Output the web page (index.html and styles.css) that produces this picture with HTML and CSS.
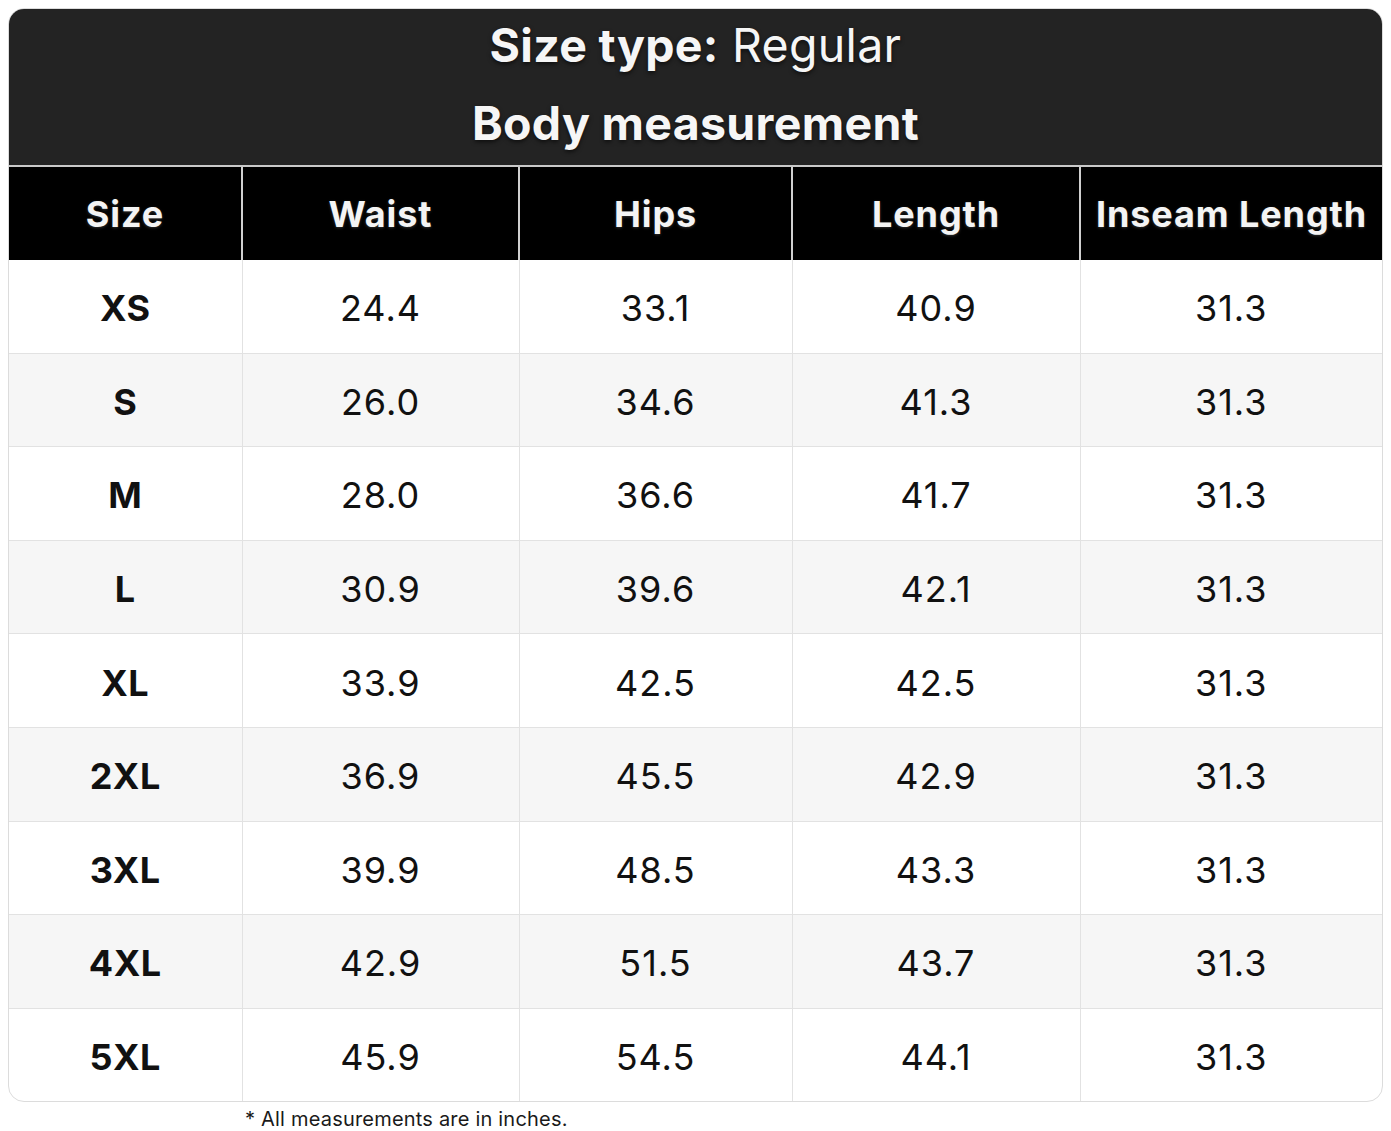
FILE: index.html
```html
<!DOCTYPE html>
<html lang="en">
<head>
<meta charset="utf-8">
<title>Size chart</title>
<link rel="stylesheet" href="styles.css">
</head>
<body>
<div class="card">
  <div class="title">
    <div class="title-line"><b>Size type:</b> Regular</div>
    <div class="title-line"><b>Body measurement</b></div>
  </div>
  <table class="chart">
    <colgroup>
      <col class="c1"><col class="c2"><col class="c3"><col class="c4"><col class="c5">
    </colgroup>
    <thead>
      <tr><th>Size</th><th>Waist</th><th>Hips</th><th>Length</th><th>Inseam Length</th></tr>
    </thead>
    <tbody>
      <tr><td class="sz">XS</td><td>24.4</td><td>33.1</td><td>40.9</td><td>31.3</td></tr>
      <tr><td class="sz">S</td><td>26.0</td><td>34.6</td><td>41.3</td><td>31.3</td></tr>
      <tr><td class="sz">M</td><td>28.0</td><td>36.6</td><td>41.7</td><td>31.3</td></tr>
      <tr><td class="sz">L</td><td>30.9</td><td>39.6</td><td>42.1</td><td>31.3</td></tr>
      <tr><td class="sz">XL</td><td>33.9</td><td>42.5</td><td>42.5</td><td>31.3</td></tr>
      <tr><td class="sz">2XL</td><td>36.9</td><td>45.5</td><td>42.9</td><td>31.3</td></tr>
      <tr><td class="sz">3XL</td><td>39.9</td><td>48.5</td><td>43.3</td><td>31.3</td></tr>
      <tr><td class="sz">4XL</td><td>42.9</td><td>51.5</td><td>43.7</td><td>31.3</td></tr>
      <tr><td class="sz">5XL</td><td>45.9</td><td>54.5</td><td>44.1</td><td>31.3</td></tr>
    </tbody>
  </table>
</div>
<p class="note">* All measurements are in inches.</p>
</body>
</html>
```
FILE: styles.css
```css
html, body {
  margin: 0;
  padding: 0;
  background: #ffffff;
}
body {
  padding: 8px;
  font-family: Inter, "Noto Sans", "Liberation Sans", sans-serif;
  color: #111111;
}
.card {
  border: 1px solid #dcdcdc;
  border-radius: 16px;
  overflow: hidden;
  background: #ffffff;
}
.title {
  background: #232323;
  color: #f6f6f6;
  text-align: center;
  height: 158px;
  border-bottom: 2px solid #c9c9c9;
  box-sizing: border-box;
  padding-top: 1px;
  display: flex;
  flex-direction: column;
  gap: 8px;
}
.title-line {
  font-size: 46.5px;
  line-height: 70px;
  font-weight: 400;
  letter-spacing: 0.3px;
  text-shadow: 0 2px 4px rgba(0, 0, 0, 0.6);
}
.title-line b {
  font-weight: 700;
}
.chart {
  width: 100%;
  border-collapse: collapse;
  table-layout: fixed;
}
.c1 { width: 233px; }
.c2 { width: 277px; }
.c3 { width: 273px; }
.c4 { width: 288px; }
.c5 { width: auto; }
.chart th {
  background: #000000;
  color: #f4f4f4;
  font-size: 36px;
  font-weight: 700;
  height: 93px;
  padding: 0;
  text-align: center;
  letter-spacing: 0.9px;
  border-left: 2px solid #d0d0d0;
  text-shadow: 0 1px 3px rgba(80, 80, 80, 0.6);
}
.chart th:first-child {
  border-left: none;
}
.chart td {
  height: 88.6px;
  padding: 4px 0 0 0;
  text-align: center;
  font-size: 36px;
  font-weight: 400;
  letter-spacing: 1px;
  color: #111111;
  border-left: 1px solid #e2e2e2;
  border-top: 1px solid #e2e2e2;
}
.chart td:first-child {
  border-left: none;
}
.chart tbody tr:first-child td {
  border-top: none;
}
.chart tbody tr:nth-child(even) td {
  background: #f6f6f6;
}
.chart td.sz {
  font-weight: 700;
  letter-spacing: 0.5px;
}
.note {
  margin: 6px 0 0 237px;
  font-size: 20px;
  line-height: 22px;
  letter-spacing: 0.2px;
  color: #1a1a1a;
}
```
